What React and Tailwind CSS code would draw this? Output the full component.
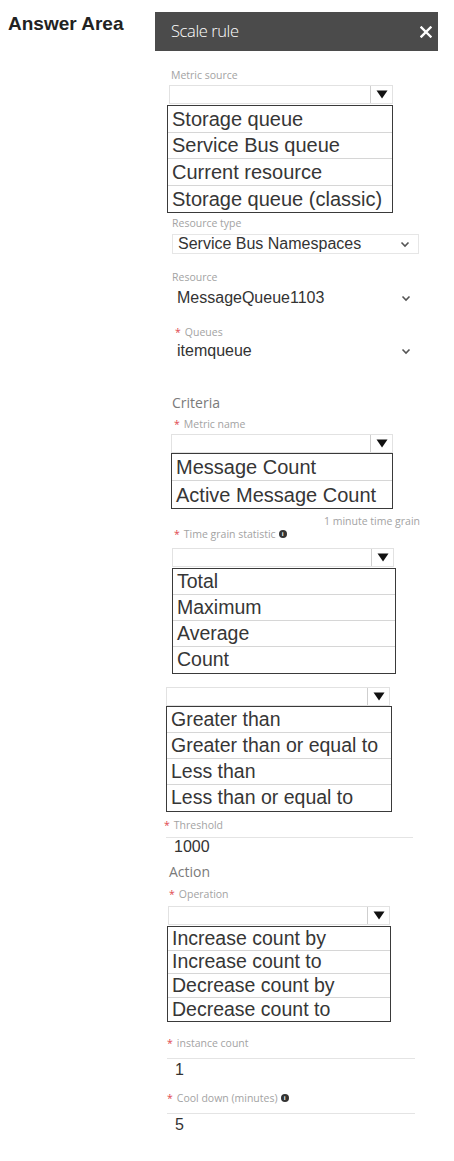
const labelFont = { fontFamily: '"Open Sans", "Liberation Sans", sans-serif' };

function Info() {
  return (
    <span className="inline-flex items-center justify-center w-[8px] h-[8px] rounded-full bg-[#333] text-white text-[6px] font-bold leading-none ml-[3px]">i</span>
  );
}

function Label({ star, info, children, className = "" }) {
  return (
    <div className={"h-[12px] text-[10.5px] leading-[12px] text-[#a3a3a3] flex items-center font-['Open_Sans'] " + className}>
      {star && <span className="text-[#e0484f] mr-[4px]">*</span>}
      {children}
      {info && <Info />}
    </div>
  );
}

function Picker({ className = "" }) {
  return (
    <div className={"h-[19px] flex border border-[#e2e2e2] " + className}>
      <div className="flex-1" />
      <div className="w-[22px] border-l border-[#cfcfcf] flex items-center justify-center">
        <svg width="12" height="9" viewBox="0 0 12 9">
          <path d="M0.5 0.5 L11.5 0.5 L6 8.5 Z" fill="#111" />
        </svg>
      </div>
    </div>
  );
}

function Options({ items, className = "", size = "text-[19.5px]", row = "h-[25.5px]" }) {
  return (
    <div className={"border-[1.5px] border-[#3a3a3a] bg-white font-['Liberation_Sans'] text-[#363636] " + className}>
      {items.map((t, i) => (
        <div key={t} className={row + " flex items-center pl-[4px] leading-none " + size + (i < items.length - 1 ? " border-b border-[#d6d6d6]" : "")}>
          {t}
        </div>
      ))}
    </div>
  );
}

function Chevron() {
  return (
    <svg width="10" height="7" viewBox="0 0 10 7" className="shrink-0">
      <path d="M1.5 1.5 L5 5 L8.5 1.5" fill="none" stroke="#555" strokeWidth="1.6" />
    </svg>
  );
}

function Select({ value, boxed, className = "" }) {
  return (
    <div className={"h-[20px] flex items-center justify-between pl-[5px] pr-[8px] font-['Liberation_Sans'] text-[16px] text-[#333] " + (boxed ? "border border-[#e6e6e6] " : "") + className}>
      <span>{value}</span>
      <Chevron />
    </div>
  );
}

function TextField({ value, className = "", pad = "" }) {
  return (
    <div className={className}>
      <div className="h-px bg-[#e4e4e4]" />
      <div className={"h-[18px] leading-[18px] font-['Liberation_Sans'] text-[16px] text-[#333] pl-[8px] box-content " + pad}>{value}</div>
    </div>
  );
}

export default function App() {
  return (
    <div className="w-[454px] h-[1161px] bg-white flex">
      <div className="w-[155px] shrink-0 pl-[8px] pt-[10px]">
        <div className="font-['Liberation_Sans'] font-bold text-[19px] text-[#222]">Answer Area</div>
      </div>

      <div className="w-[283px] pt-[12px] flex flex-col">
        <div className="h-[39px] bg-[#4b4b4b] flex items-center justify-between pl-[16px] pr-[6px]">
          <span className="text-white text-[16.5px] font-light tracking-[-0.4px]" style={labelFont}>Scale rule</span>
          <svg width="12" height="12" viewBox="0 0 12 12">
            <path d="M1.5 1.5 L10.5 10.5 M10.5 1.5 L1.5 10.5" stroke="#fff" strokeWidth="2.4" strokeLinecap="square" />
          </svg>
        </div>

        <Label className="mt-[18px] ml-[16px]">Metric source</Label>
        <Picker className="mt-[4px] ml-[14px] w-[224px]" />
        <Options
          className="mt-[1px] ml-[12px] w-[226px]"
          size="text-[20px]"
          row="h-[26.5px]"
          items={["Storage queue", "Service Bus queue", "Current resource", "Storage queue (classic)"]}
        />

        <Label className="mt-[4px] ml-[17px]">Resource type</Label>
        <Select className="mt-[5px] ml-[17px] w-[247px]" boxed value="Service Bus Namespaces" />

        <Label className="mt-[17px] ml-[17px]">Resource</Label>
        <Select className="mt-[5px] ml-[17px] w-[247px]" value="MessageQueue1103" />

        <Label star className="mt-[18px] ml-[20px]">Queues</Label>
        <Select className="mt-[3px] ml-[17px] w-[247px]" value="itemqueue" />

        <div className="mt-[33px] ml-[17px] h-[18px] leading-[18px] text-[14px] text-[#7a7a7a]" style={labelFont}>Criteria</div>
        <Label star className="mt-[6px] ml-[19px]">Metric name</Label>
        <Picker className="mt-[4px] ml-[16px] w-[222px]" />
        <Options
          className="ml-[16px] w-[222px]"
          size="text-[20px]"
          row="h-[27px]"
          items={["Message Count", "Active Message Count"]}
        />
        <div className="mt-[6px] mr-[18px] self-end h-[12px] leading-[12px] text-[10.5px] text-[#a3a3a3]" style={labelFont}>1 minute time grain</div>

        <Label star info className="mt-[1px] ml-[19px]">Time grain statistic</Label>
        <Picker className="mt-[8px] ml-[17px] w-[222px]" />
        <Options
          className="mt-[1px] ml-[17px] w-[224px]"
          row="h-[26px]"
          items={["Total", "Maximum", "Average", "Count"]}
        />

        <Picker className="mt-[13px] ml-[11px] w-[224px]" />
        <Options
          className="ml-[11px] w-[226px]"
          row="h-[26px]"
          items={["Greater than", "Greater than or equal to", "Less than", "Less than or equal to"]}
        />

        <Label star className="mt-[7px] ml-[9px]">Threshold</Label>
        <TextField value="1000" className="mt-[6px] ml-[11px] w-[247px]" />

        <div className="mt-[7px] ml-[14px] h-[18px] leading-[18px] text-[14px] text-[#7a7a7a]" style={labelFont}>Action</div>
        <Label star className="mt-[7px] ml-[14px]">Operation</Label>
        <Picker className="mt-[6px] ml-[13px] w-[222px]" />
        <Options
          className="mt-[1px] ml-[12px] w-[224px]"
          row="h-[23.5px]"
          items={["Increase count by", "Increase count to", "Decrease count by", "Decrease count to"]}
        />

        <Label star className="mt-[15px] ml-[12px]">instance count</Label>
        <TextField value="1" pad="pt-[2px]" className="mt-[9px] ml-[12px] w-[248px]" />

        <Label star info className="mt-[13px] ml-[12px]">Cool down (minutes)</Label>
        <TextField value="5" pad="pt-[2px]" className="mt-[9px] ml-[12px] w-[248px]" />
      </div>
    </div>
  );
}
